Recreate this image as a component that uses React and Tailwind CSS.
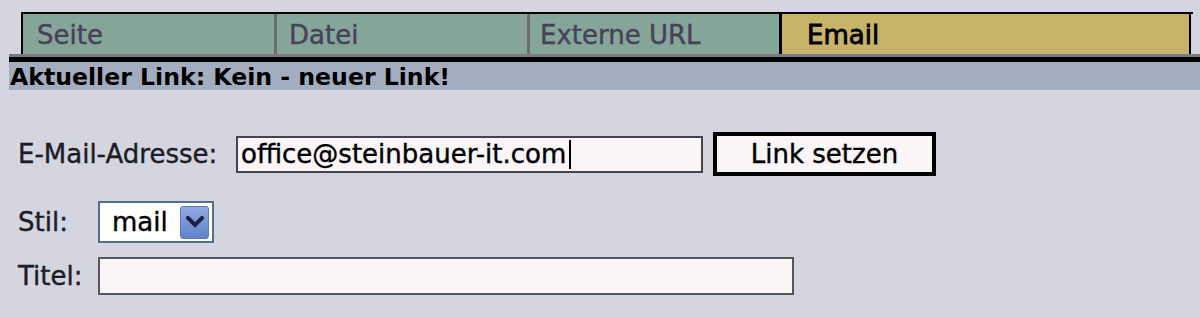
export default function App() {
  const tabs = [
    { label: "Seite", w: "w-[251px]", pl: "pl-[14px]" },
    { label: "Datei", w: "w-[250px]", pl: "pl-[12px]" },
    { label: "Externe URL", w: "w-[249px]", pl: "pl-[10px]" },
  ];
  return (
    <div className="w-[1200px] h-[317px] overflow-hidden bg-[#d5d5df] pt-[12px] font-['DejaVu_Sans',sans-serif] text-[26px] leading-none [-webkit-text-stroke:0.4px]">
      {/* Tabs */}
      <div className="ml-[21px] w-[1172px] h-[42px] flex border-t-2 border-l-2 border-black">
        {tabs.map((t, i) => (
          <div key={t.label} className="flex">
            <div className={`${t.w} h-full bg-[#85a599] flex items-center ${t.pl} text-[#474257] pt-[1px]`}>
              {t.label}
            </div>
            {i < 2 && <div className="w-[3px] h-full bg-[#6c6c74]" />}
          </div>
        ))}
        <div className="w-[3px] h-full bg-black" />
        <div className="w-[409px] h-full bg-[#c8b468] border-r-2 border-black flex items-center pl-[25px] text-black pt-[1px] [-webkit-text-stroke:0.8px]">
          Email
        </div>
      </div>
      {/* Lines and band */}
      <div className="ml-[9px]">
        <div className="h-[3px] bg-[#7b7b84]" />
        <div className="h-[5px] bg-black" />
        <div className="h-[28px] bg-[#a4adbf] flex items-center pl-[1px] pt-[3px] font-bold text-[23.6px] text-black [-webkit-text-stroke:0px]">
          Aktueller Link: Kein - neuer Link!
        </div>
      </div>
      {/* Form */}
      <div className="pl-[18px] text-[#1c1c26]">
        <div className="mt-[42px] flex items-center h-[44px]">
          <div className="w-[218px]">E-Mail-Adresse:</div>
          <div className="w-[467px] h-[37px] border-2 border-[#44444f] bg-[#faf6f8] flex items-center pl-[3px] text-black">
            <span>office@steinbauer-it.com</span>
            <span className="ml-[3px] w-[2px] h-[29px] bg-black" />
          </div>
          <div className="ml-[10px] w-[223px] h-[44px] border-[4px] border-black bg-[#faf6f8] flex items-center justify-center text-black">
            Link setzen
          </div>
        </div>
        <div className="mt-[25px] flex items-center h-[42px]">
          <div className="w-[80px]">Stil:</div>
          <div className="w-[116px] h-[42px] border-2 border-[#50708f] bg-white flex items-center pl-[12px] pr-[3px] text-black">
            <span className="flex-1">mail</span>
            <div className="w-[29px] h-[33px] rounded-[3px] bg-gradient-to-b from-[#8fa9e2] to-[#6283cb] border border-[#5b78b8] flex items-center justify-center">
              <svg width="18" height="12" viewBox="0 0 18 12">
                <path d="M2 2 L9 9 L16 2" fill="none" stroke="#17233f" strokeWidth="4" strokeLinecap="square" />
              </svg>
            </div>
          </div>
        </div>
        <div className="mt-[14px] flex items-center h-[38px]">
          <div className="w-[80px]">Titel:</div>
          <div className="w-[696px] h-[38px] border-2 border-[#56565e] bg-[#faf6f8]" />
        </div>
      </div>
    </div>
  );
}
